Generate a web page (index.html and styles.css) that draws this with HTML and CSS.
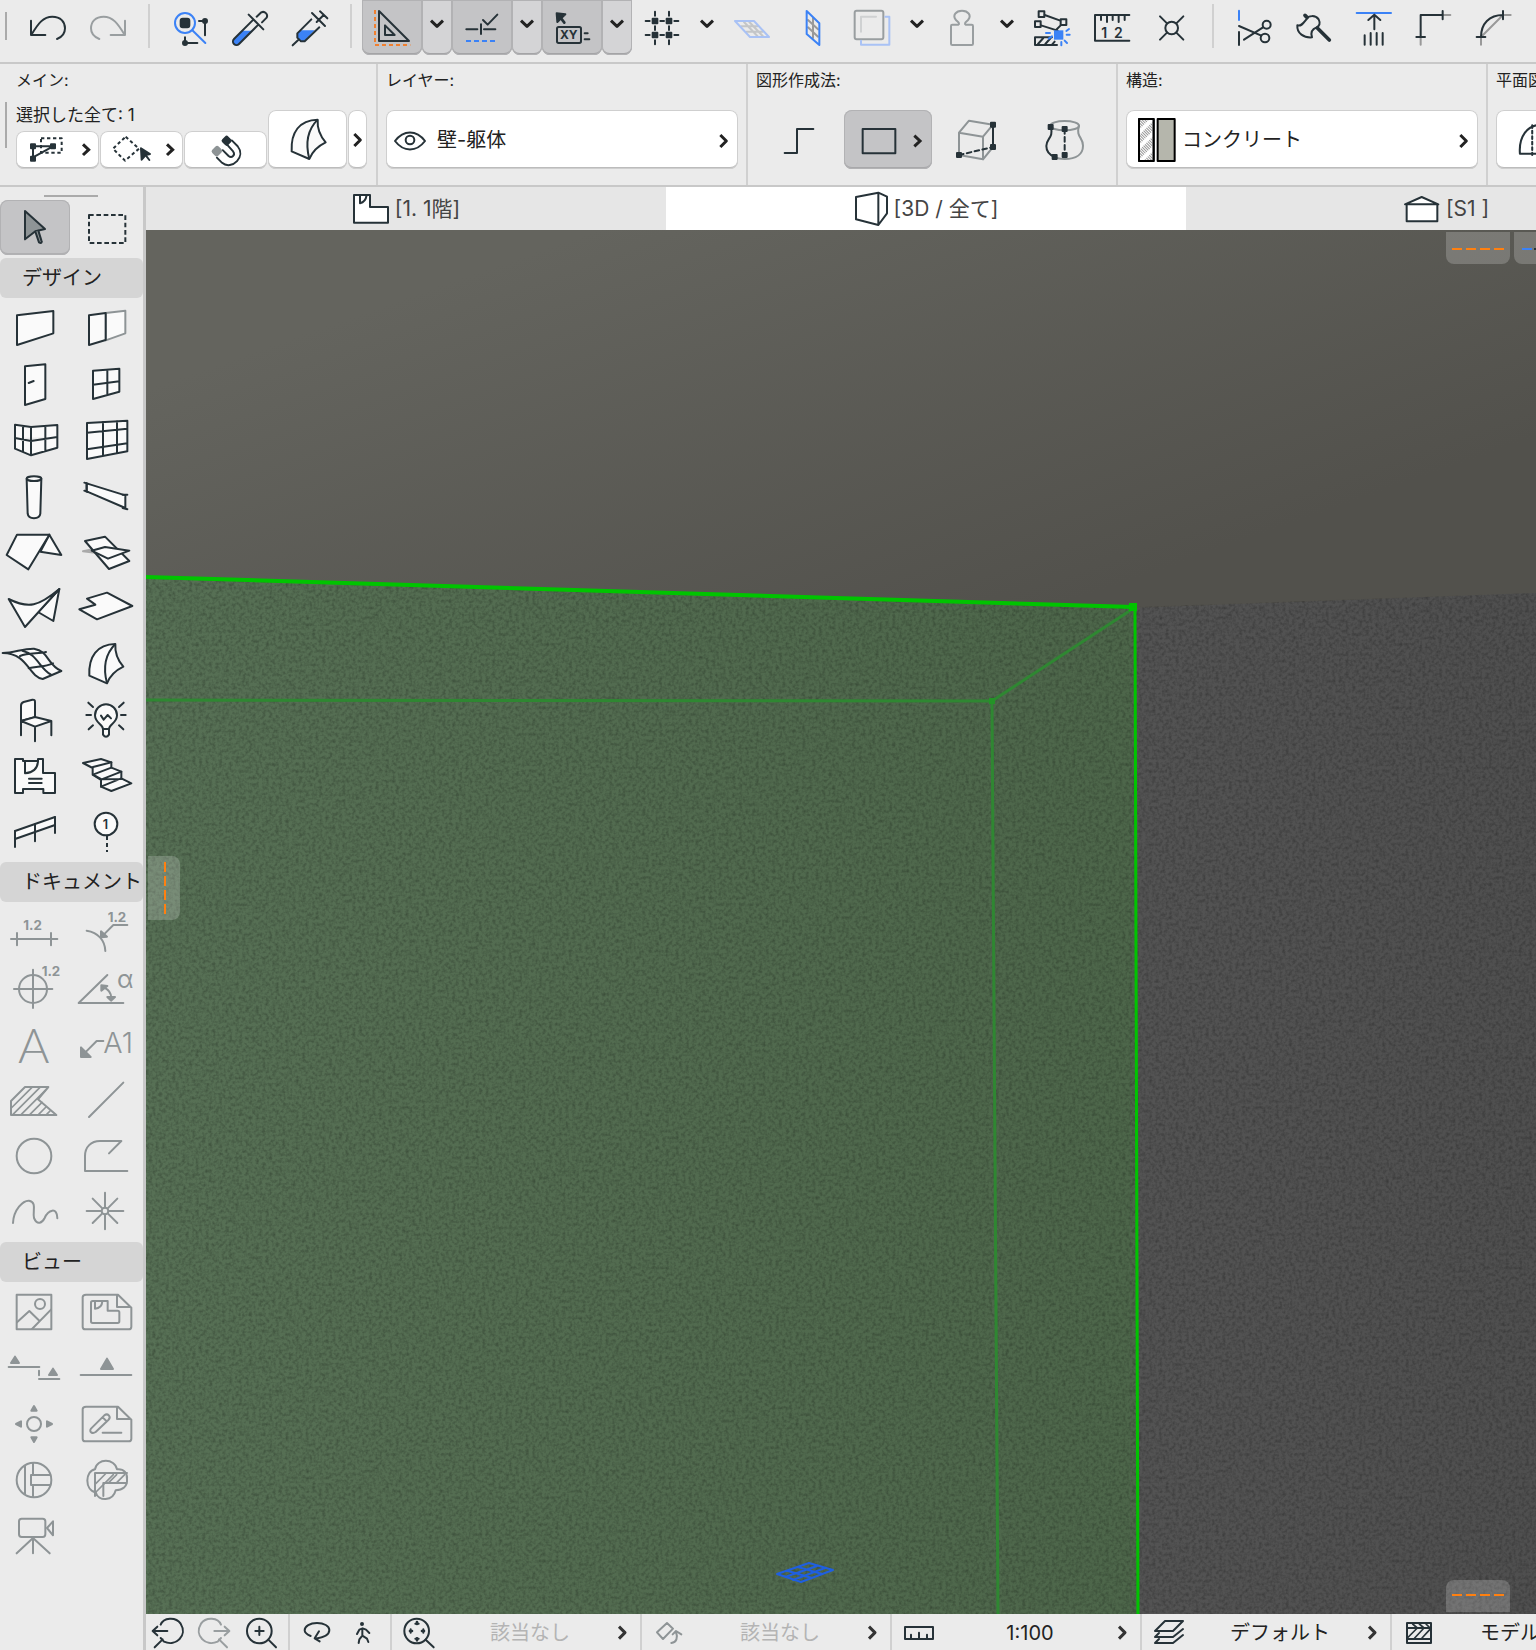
FILE: index.html
```html
<!DOCTYPE html>
<html lang="ja">
<head>
<meta charset="utf-8">
<title>3D / 全て</title>
<link rel="stylesheet" href="styles.css">
</head>
<body>
<svg class="defs" aria-hidden="true">
  <symbol id="down" viewBox="0 0 90 165"><path d="M27 62l18 17 18-17" fill="none" stroke="#222" stroke-width="9"/></symbol>
  <symbol id="next" viewBox="0 0 84 177"><path d="M34 72l18 18-18 18" fill="none" stroke="#222" stroke-width="9"/></symbol>
  <symbol id="more" viewBox="0 0 108 108"><path d="M45 38l18 18-18 18" fill="none" stroke="#333" stroke-width="9"/></symbol>
  <symbol id="shell" viewBox="0 0 120 130"><path fill="#fafafa" d="M9 102C6 45 32 8 87 7c-2 30 10 52 24 68-25 12-40 27-49 50z"/><path d="M87 7C52 42 52 87 62 125"/></symbol>
</svg>

<header class="toolbar">
  <span class="grip"></span>
  <button class="tool" aria-label="取り消し"><svg viewBox="54 0 180 165"><path d="M93 62v43h43M95 103c20-33 35-53 62-53 25 0 38 16 38 35 0 14-8 26-24 32"/></svg></button>
  <button class="tool dim" aria-label="やり直し"><svg viewBox="234 0 180 165"><path d="M375 62v43h-43M373 103c-20-33-35-53-62-53-25 0-38 16-38 35 0 14 9 26 25 32"/></svg></button>
  <span class="sep"></span>
  <button class="tool" aria-label="検索と選択"><svg viewBox="480 0 180 165"><g class="blue"><circle cx="555" cy="69" r="30"/><path d="M577 91l39 38"/></g><rect class="solid" x="542" y="56" width="26" height="26" rx="6"/><circle class="solid" cx="615" cy="63" r="6"/><path d="M597 63h18v43M555 112v17h37"/><circle class="solid" cx="555" cy="129" r="6"/></svg></button>
  <button class="tool" aria-label="スポイト"><svg viewBox="660 0 180 165"><path class="bluefill" d="M726 92h30l-40 40a10 10 0 0 1-15-14z"/><path d="M760 59l-58 58a10 10 0 0 0 15 15l58-58M770 50l14-13a12 12 0 0 1 16 16l-14 14M746 44l44 44"/></svg></button>
  <button class="tool" aria-label="注入"><svg viewBox="840 0 180 165"><path class="bluefill" d="M902 91h42l-32 33h-10l-11-11v-12z"/><path d="M934 58l-42 42v13l11 11h11l44-42M936 39l39 39M960 34l22 21M971 45l-21 21M897 118l-19 18"/></svg></button>
  <span class="sep"></span>
  <button class="tool on" aria-label="ガイド線"><svg viewBox="1086 0 180 165"><path class="orange" stroke-dasharray="12 9" stroke-linecap="butt" d="M1125 30v105h106"/><path d="M1137 33v90h90zM1155 76v29h29z"/></svg></button><button class="drop on" aria-label="ガイド線の設定"><svg><use href="#down"/></svg></button>
  <button class="tool on" aria-label="スナップガイド"><svg viewBox="1356 0 180 165"><path d="M1399 88h33M1452 88h34M1443 73v29M1449 60l14 14 29-30"/><path class="blue" stroke-dasharray="15 9" stroke-linecap="butt" d="M1398 123h90"/></svg></button><button class="drop on" aria-label="スナップガイドの設定"><svg><use href="#down"/></svg></button>
  <button class="tool on" aria-label="座標入力"><svg viewBox="126 0 180 165"><path class="solid" d="M170 40l26 3-24 23z"/><path d="M181 52l12 16" stroke-width="8"/><rect x="171" y="81" width="72" height="48" rx="5"/><text x="180" y="118" font-size="36" font-weight="700">XY</text><path d="M254 100h9M254 118h14"/></svg></button><button class="drop on" aria-label="座標入力の設定"><svg><use href="#down"/></svg></button>
  <button class="tool" aria-label="グリッドスナップ"><svg viewBox="396 0 180 165"><path d="M437 63h12M481 63h11M523 63h12M437 105h12M481 105h11M523 105h12M465 35v12M465 79v11M465 121v12M507 35v12M507 79v11M507 121v12"/><g class="solid"><rect x="458" y="56" width="14" height="14"/><rect x="500" y="56" width="14" height="14"/><rect x="458" y="98" width="14" height="14"/><rect x="500" y="98" width="14" height="14"/></g></svg></button><button class="drop" aria-label="グリッドの設定"><svg><use href="#down"/></svg></button>
  <button class="tool" aria-label="編集平面"><svg viewBox="666 0 180 165"><path stroke="#c4c6c8" d="M724 79h48M740 95h48M732 66l40 42M748 66l40 42"/><path stroke="#a9c2f5" d="M705 63h57l45 48h-57z"/></svg></button>
  <button class="tool" aria-label="垂直平面"><svg viewBox="846 0 180 165"><path stroke="#999" d="M939 54v60M924 60l30 28M924 82l30 28"/><path class="blue" d="M920 33v69l38 33V70z"/></svg></button>
  <button class="tool dim" aria-label="面"><svg viewBox="1026 0 180 165"><rect x="1064" y="32" width="86" height="86" rx="6"/><path stroke="#cfd1d2" d="M1083 95V50h45"/><path stroke="#a9c2f5" d="M1156 50h12v84h-85v-12"/></svg></button><button class="drop" aria-label="面の設定"><svg><use href="#down"/></svg></button>
  <button class="tool dim" aria-label="重力"><svg viewBox="1296 0 180 165"><path d="M1353 78a4 4 0 0 1 4-4h18c6-4-2-9-7-14-12-14 0-28 18-28s30 14 18 28c-5 5-13 10-7 14h18a4 4 0 0 1 4 4v53a4 4 0 0 1-4 4h-58a4 4 0 0 1-4-4z"/></svg></button><button class="drop" aria-label="重力の設定"><svg><use href="#down"/></svg></button>
  <button class="tool" aria-label="要素を編集"><svg viewBox="36 0 180 165"><path d="M104 45l47 17M93 76l50 16M152 76l-14 14"/><g><rect x="86" y="34" width="17" height="17"/><rect x="75" y="64" width="17" height="17"/><rect x="152" y="58" width="17" height="17"/></g><path d="M126 112H75v23h66M84 132l16-18M106 132l16-18M126 134l8-9"/><rect class="bluefill" x="132" y="91" width="28" height="28"/><path class="blue" d="M108 99h12M116 116l10-7M169 93l8-6M170 104h9M164 122l7 7M154 126v10"/></svg></button>
  <button class="tool" aria-label="寸法"><svg viewBox="215 0 180 165"><path d="M357 45H254v77h103M272 48v12M290 48v18M307 48v12M325 48v18M343 48v12"/><text x="273 311" y="113" font-size="42" font-weight="600">12</text></svg></button>
  <button class="tool" aria-label="交点"><svg viewBox="394 0 180 165"><circle cx="483" cy="84" r="19"/><path d="M448 49l21 21M518 49l-21 21M448 119l21-21M518 119l-21-21"/></svg></button>
  <span class="sep"></span>
  <button class="tool" aria-label="分割"><svg viewBox="638 0 180 165"><path class="blue" d="M683 32v28"/><path d="M683 96v39M683 78l67 29M698 119l57-37"/><circle cx="766" cy="74" r="12"/><circle cx="761" cy="114" r="13"/></svg></button>
  <button class="tool" aria-label="切断"><svg viewBox="817 0 180 165"><path d="M857 76c14 4 20-10 29-20 4-9 25-12 35 2 6 12 2 20-6 24-16 6-18 18-14 30-24 2-46-12-44-36z"/><path d="M917 84l36 36M880 46l6 6" stroke-width="11"/></svg></button>
  <button class="tool" aria-label="調整"><svg viewBox="996 0 180 165"><path class="blue" d="M1034 39h103"/><path d="M1087 88V46M1069 60l18-16 18 16M1058 106v28M1076 99v35M1094 99v35M1112 99v35"/></svg></button>
  <button class="tool" aria-label="交差"><svg viewBox="1175 0 180 165"><path stroke="#999" d="M1225 114v20M1293 45h21"/><path d="M1225 111V45h66M1212 111h26M1291 33v25"/></svg></button>
  <button class="tool" aria-label="フィレット"><svg viewBox="1353 0 180 165"><path stroke="#999" d="M1404 111l66-66M1404 114v20M1472 45h21"/><path d="M1404 111c0-40 25-66 66-66M1391 111h26M1470 33v25"/></svg></button>
</header>

<div class="infobar">
  <section class="panel main-panel">
    <span class="grip"></span>
    <div class="panel-body">
      <h3>メイン:</h3>
      <div class="main-row">
        <div class="selected">
          <p>選択した全て: 1</p>
          <div class="buttons">
            <button class="btn" aria-label="選択要素"><svg viewBox="48 394 249 114"><rect x="123" y="416" width="62" height="43" stroke-dasharray="10 8" stroke-linecap="butt"/><path d="M99 477v-37h60l-60 33"/><g class="solid"><rect x="93" y="434" width="12" height="12"/><rect x="153" y="434" width="12" height="12"/><rect x="93" y="471" width="12" height="12"/></g><path class="chev" d="M249 434l17 16-17 16"/></svg></button>
            <button class="btn" aria-label="選択方法"><svg viewBox="300 394 249 114"><path stroke-dasharray="10 8" stroke-linecap="butt" d="M377 411l40 36-42 36-36-36z"/><path class="solid" d="M423 446l27 17-13 3-12 14z"/><path d="M438 468l10 13"/><path class="chev" d="M501 434l17 16-17 16"/></svg></button>
            <button class="btn" aria-label="磁石"><svg viewBox="552 391 249 117"><path d="M650 473l16 16c14 12 34 8 46-5s14-31 2-46l-18-18M668 450l18 18c10 8 22-3 14-14l-18-20"/><rect x="640" y="442" width="20" height="22" rx="4" transform="rotate(45 650 453)" fill="#8e9496" stroke="#8e9496"/><rect class="solid" x="670" y="411" width="20" height="20" rx="4" transform="rotate(45 680 421)"/></svg></button>
          </div>
        </div>
        <button class="btn shell" aria-label="シェル設定"><svg viewBox="-62 -22 237 177"><use href="#shell" width="120" height="130"/></svg></button>
        <button class="btn slim" aria-label="お気に入り"><svg viewBox="15 0 57 177"><use href="#next" width="84" height="177"/></svg></button>
      </div>
    </div>
  </section>
  <section class="panel">
    <div class="panel-body">
      <h3><label for="layer">レイヤー:</label></h3>
      <div class="field">
        <svg class="lead" viewBox="1161 333 150 171"><path d="M1185 423c26-34 64-34 90 0-26 34-64 34-90 0z"/><circle cx="1230" cy="420" r="13"/></svg>
        <select id="layer"><option>壁-躯体</option></select>
        <svg class="tail"><use href="#next"/></svg>
      </div>
    </div>
  </section>
  <section class="panel">
    <div class="panel-body">
      <h3>図形作成法:</h3>
      <div class="methods">
        <button aria-label="押し出し"><svg viewBox="768 330 264 177"><path d="M854 459h37v-72h49"/></svg></button>
        <button class="on" aria-label="矩形"><svg viewBox="1032 330 264 177"><rect x="1088" y="387" width="98" height="73"/><path class="chev" d="M1243 407l17 16-17 16"/></svg></button>
        <button aria-label="箱形"><svg viewBox="1296 330 264 177"><path stroke="#8e9496" d="M1377 398l30-36 72 12-30 36zM1377 398v67l72 13v-68M1449 478l30-37"/><path d="M1479 374v67"/><path stroke-dasharray="14 10" d="M1377 465l102-24"/><g class="solid"><rect x="1473" y="368" width="12" height="12"/><rect x="1473" y="435" width="12" height="12"/><rect x="1371" y="459" width="12" height="12"/></g></svg></button>
        <button aria-label="回転体"><svg viewBox="30 330 264 177"><g stroke="#8e9496"><ellipse cx="164" cy="377" rx="43" ry="14"/><path d="M207 377c-10 34 12 34 12 60 0 25-20 40-55 40-10 0-20 0-28-6"/></g><path d="M122 380c10 34-13 34-13 58 0 18 10 27 25 33"/><path stroke-dasharray="14 10" d="M164 387v78"/><g class="solid"><rect x="116" y="375" width="12" height="12"/><rect x="158" y="381" width="12" height="12"/><rect x="158" y="459" width="12" height="12"/><rect x="128" y="465" width="12" height="12"/></g></svg></button>
      </div>
    </div>
  </section>
  <section class="panel">
    <div class="panel-body">
      <h3><label for="structure">構造:</label></h3>
      <div class="field">
        <svg class="lead wide" viewBox="349 333 165 171"><clipPath id="slab"><rect x="385" y="357" width="44" height="126"/></clipPath><rect x="385" y="357" width="44" height="126" fill="#fff"/><g clip-path="url(#slab)" stroke="#999" stroke-width="20" stroke-dasharray="3 3" stroke-linecap="butt"><path d="M375 385l60-60M375 430l60-60M375 475l60-60M375 520l60-60"/></g><rect x="385" y="357" width="44" height="126" stroke="#000"/><rect x="441" y="357" width="51" height="126" fill="#b5b6ac" stroke="#000"/></svg>
        <select id="structure"><option>コンクリート</option></select>
        <svg class="tail"><use href="#next"/></svg>
      </div>
    </div>
  </section>
  <section class="panel last">
    <div class="panel-body">
      <h3>平面図</h3>
      <button class="btn plan" aria-label="平面図と断面図"><svg viewBox="1454 333 240 171"><path d="M1618 460h-94c-4-50 22-84 60-84"/><path stroke-dasharray="8 8" d="M1560 377v87"/></svg></button>
    </div>
  </section>
</div>

<div class="workspace">
  <nav class="toolbox">
    <span class="handle"></span>
    <div class="cells first">
      <button class="on" aria-label="矢印"><svg viewBox="0 30 216 168"><path fill="#8e9496" d="M75 63l60 54-29 7-31 24z"/><path d="M106 125l11 32c8 5 10-2 7-6l-9-29" fill="#8e9496"/></svg></button>
      <button aria-label="矩形選択"><svg viewBox="216 30 213 168"><rect x="267" y="75" width="109" height="84" stroke-dasharray="14 8" stroke-linecap="butt"/></svg></button>
    </div>
    <h2>デザイン</h2>
    <div class="cells">
      <button aria-label="壁"><svg viewBox="0 330 216 168"><path class="w" d="M51 376l109-13v67L51 465z"/></svg></button>
      <button aria-label="壁端部"><svg viewBox="216 330 213 168"><path class="w" stroke="#8e9496" d="M317 369l59-7v68l-59 21z"/><path class="w" d="M267 376l50-7v81l-50 15z"/></svg></button>
      <button aria-label="ドア"><svg viewBox="0 498 216 168"><path class="w" d="M75 529l61-6v104l-61 18z"/><path d="M86 579l15-6"/></svg></button>
      <button aria-label="窓"><svg viewBox="216 498 213 168"><path class="w" d="M279 542l79-6v69l-79 22zM322 539v76M279 584l79-10"/></svg></button>
      <button aria-label="コーナー窓"><svg viewBox="0 666 216 168"><path class="w" d="M45 704l48 7 79-6v68l-79 23-48-20zM93 711v85M69 708v78M136 708v76M45 744l48 9 79-12"/></svg></button>
      <button aria-label="カーテンウォール"><svg viewBox="216 666 213 168"><path class="w" d="M261 699l121-7v92l-121 23zM309 696v102M351 694v96M261 728l121-12M261 778l121-18"/></svg></button>
      <button aria-label="柱"><svg viewBox="0 834 216 168"><path class="w" d="M80 866l3 105c2 18 36 18 38 0l3-105"/><ellipse class="w" cx="102" cy="866" rx="22" ry="7"/></svg></button>
      <button aria-label="梁"><svg viewBox="216 834 213 168"><path class="w" d="M260 880l116 36v38l-116-50z"/><path d="M253 878l10 3M253 902l10 4M368 914h14M368 954l14 4M260 880v24"/></svg></button>
      <button aria-label="屋根"><svg viewBox="0 -18 216 168"><path class="w" d="M148 14l36 61-63-10z"/><path class="w" d="M51 14h97L85 118 20 75z"/></svg></button>
      <button aria-label="天窓"><svg viewBox="216 -18 213 168"><path fill="#bbb" stroke="#aaa" d="M249 64l36-8 12 14z"/><path class="w" d="M255 33l60-13 73 73-61 24z"/><path class="w" d="M275 62l40-11 73 11-64 24z"/></svg></button>
      <button aria-label="シェル屋根"><svg viewBox="0 150 216 168"><path class="w" d="M178 177l-18 96-46-27z"/><path class="w" d="M26 207c60 30 90 22 152-30L75 291z"/></svg></button>
      <button aria-label="スラブ"><svg viewBox="216 150 213 168"><path class="w" d="M261 206l60-18 76 40-106 40-53-30 48-14z"/></svg></button>
      <button aria-label="メッシュ"><svg viewBox="0 318 216 168"><path class="w" d="M8 369c35 0 60-14 94-13 45 8 40 50 82 67l-56 24C85 440 85 370 8 369zM60 378c25-10 55-6 78-12M86 415c25-6 50-4 73-15M67 362c45 10 50 52 86 72"/></svg></button>
      <button aria-label="シェル"><svg viewBox="216 318 213 168"><use href="#shell" x="259" y="335" width="120" height="130"/></svg></button>
      <button aria-label="オブジェクト"><svg viewBox="0 486 216 168"><path class="w" d="M63 573v-46q0-8 8-11l26-7q8-1 8 7v46z"/><path class="w" d="M63 573l42-12 49 12-49 17zM63 573v43M105 590v44M154 573v43"/></svg></button>
      <button aria-label="ランプ"><svg viewBox="216 486 213 168"><path class="w" d="M309 597c0-14-24-18-24-41a33 33 0 0 1 66 0c0 23-24 27-24 41zM309 597h18v17q-9 13-18 0z"/><path d="M303 557l8 12 12-14 10 10M265 518l14 13M371 518l-14 13M259 555h14M363 555h14M266 598l13-12M370 598l-13-12"/></svg></button>
      <button aria-label="ゾーン"><svg viewBox="0 654 216 168"><path class="w" d="M45 687h24v6h45v-6h15v42h36v60h-35v-12H69v12H45z"/><path d="M75 693v37c24-2 38-14 39-37M87 746h38M87 759h38"/></svg></button>
      <button aria-label="階段"><svg viewBox="216 654 213 168"><path class="w" d="M249 699l54-12 31 10v16l30 12v20l30 15-60 23-31-13v-20l-25-16v-20z"/><path d="M279 711l55-14M279 734l55-21M279 734l26 14 59-23M303 748l61-1M303 770l61-25"/></svg></button>
      <button aria-label="手摺り"><svg viewBox="0 822 216 168"><path class="w" d="M45 903l120-42v24L45 927z"/><path d="M45 903v48M105 883v51M165 861v48"/></svg></button>
      <button aria-label="通り芯"><svg viewBox="216 822 213 168"><circle class="w" cx="318" cy="882" r="34"/><text x="308" y="896" font-size="38" font-weight="600">1</text><path stroke-dasharray="12 9" stroke-linecap="butt" d="M321 918v48"/></svg></button>
    </div>
    <h2>ドキュメント</h2>
    <div class="cells dim">
      <button aria-label="寸法"><svg viewBox="0 132 216 168"><text x="70" y="209" font-size="40" font-weight="700">1.2</text><path d="M33 237h139M51 219v37M153 219v37"/></svg></button>
      <button aria-label="半径寸法"><svg viewBox="216 132 213 168"><text x="323" y="185" font-size="40" font-weight="700">1.2</text><path d="M382 195h-42l-25 25M260 212c35 5 55 30 56 61"/><path class="solid" d="M303 214v18l18-2z"/></svg></button>
      <button aria-label="レベル寸法"><svg viewBox="0 300 216 168"><text x="125" y="348" font-size="40" font-weight="700">1.2</text><circle cx="99" cy="387" r="42"/><path d="M42 387h115M99 329v115"/></svg></button>
      <button aria-label="角度寸法"><svg viewBox="216 300 213 168"><path d="M322 345l-86 84h134M312 382c16 8 22 20 22 32"/><path class="solid" d="M304 392v-16l18 2zM322 411h23l-12 11z"/><text x="351" y="383" font-size="74" font-weight="400">α</text></svg></button>
      <button aria-label="テキスト"><svg viewBox="0 468 216 168"><text class="thin" x="54" y="610" font-size="144">A</text></svg></button>
      <button aria-label="ラベル"><svg viewBox="216 468 213 168"><text x="310" y="580" font-size="86" font-weight="300">A1</text><path d="M310 543h-20l-34 34"/><path class="solid" d="M243 562v29h29z"/></svg></button>
      <button aria-label="塗りつぶし"><svg viewBox="0 636 216 168"><path d="M33 723l42-42h70l-31 37 55 47H33z"/><path stroke-width="5" d="M34 744l62-62M39 763l81-81M64 763l72-72M90 763l36-36M116 763l22-22M140 763l10-10"/></svg></button>
      <button aria-label="線"><svg viewBox="216 636 213 168"><path d="M267 771l103-103"/></svg></button>
      <button aria-label="円"><svg viewBox="0 804 216 168"><circle cx="102" cy="888" r="52"/></svg></button>
      <button aria-label="ポリライン"><svg viewBox="216 804 213 168"><path d="M382 933H255v-45c0-27 18-45 45-45h64l-37 37"/></svg></button>
      <button aria-label="スプライン"><svg viewBox="0 972 216 168"><path d="M39 1089c2-40 30-68 48-67 25 4 10 34 15 52 10 24 25 14 32 0 10-24 38-35 38 1"/></svg></button>
      <button aria-label="ホットスポット"><svg viewBox="216 972 213 168"><circle cx="315" cy="1053" r="10"/><path d="M315 998v44M315 1064v44M260 1053h44M326 1053h44M278 1016l29 29M352 1016l-29 29M278 1089l29-29M352 1089l-29-29"/></svg></button>
    </div>
    <h2>ビュー</h2>
    <div class="cells dim">
      <button aria-label="図"><svg viewBox="0 132 216 168"><rect x="50" y="164" width="104" height="104"/><circle cx="120" cy="192" r="15"/><path d="M51 247l37-34 30 29M96 267l57-58"/></svg></button>
      <button aria-label="図面"><svg viewBox="216 132 213 168"><path d="M258 164h96l40 39v57q0 8-8 8H256q-8 0-8-8v-88q0-8 10-8zM351 166v35h40"/><path d="M278 183h45v29h30q5 0 5 5v27q0 5-5 5h-75q-5 0-5-5v-56q0-5 5-5M285 184v22c14-1 21-9 22-22"/></svg></button>
      <button aria-label="断面図"><svg viewBox="0 300 216 168"><path d="M26 381h92M117 392v14M117 417h61"/><path class="solid" d="M45 350l12 19H33zM159 386l12 19h-24z"/></svg></button>
      <button aria-label="立面図"><svg viewBox="216 300 213 168"><path d="M242 405h152"/><path class="solid" d="M321 356l18 31h-36z"/></svg></button>
      <button aria-label="展開図"><svg viewBox="0 468 216 168"><circle cx="102" cy="552" r="21"/><path class="solid" d="M102 498l8 14H94zM102 606l8-14H94zM48 552l15-8v16zM156 552l-15-8v16z"/></svg></button>
      <button aria-label="ワークシート"><svg viewBox="216 468 213 168"><path d="M258 500h96l40 39v57q0 8-8 8H256q-8 0-8-8v-88q0-8 10-8zM351 502v35h40M308 578h56"/><path d="M273 566l40-40c10-8 22 4 12 14l-38 36c-10 7-21-1-14-10zM308 532l11 11"/></svg></button>
      <button aria-label="詳細図"><svg viewBox="0 636 216 168"><circle cx="102" cy="720" r="52"/><path d="M75 678v84M99 669v36M99 735v36M151 705H93v30h58"/></svg></button>
      <button aria-label="変更"><svg viewBox="216 636 213 168"><path d="M285 688c5-34 60-34 66 0 22-2 32 12 30 30 2 22-14 32-34 33-8 34-52 34-60 6-34-8-32-64-2-69zM285 768v-69h96M310 768v-39h71"/><path stroke-width="5" d="M288 730l28-28M288 756l52-52M326 728l24-24M350 728l24-24"/></svg></button>
      <button aria-label="カメラ"><svg viewBox="0 804 216 168"><rect x="57" y="836" width="79" height="55" rx="8"/><path d="M141 864l18-20v42zM99 894v46M99 894l-49 46M99 894l50 46"/></svg></button>
    </div>
  </nav>

  <main class="stage">
    <div class="tabs" role="tablist">
      <button class="tab" role="tab"><svg width="38" height="32" viewBox="1047 573 114 96"><path fill="#fff" d="M1053 579h48v36h54v47h-102z"/><path d="M1071 579v25c12-3 18-12 20-25"/></svg>[1. 1階]</button>
      <button class="tab active" role="tab"><svg width="35" height="36" viewBox="1058 573 105 108"><path d="M1064 591l67-13 26 12v50l-26 35-67-17zM1131 578v97"/></svg>[3D / 全て]</button>
      <button class="tab" role="tab"><svg width="38" height="28" viewBox="1166 579 114 84"><path fill="#fff" d="M1177 607v51h92v-51M1172 607l50-22 50 22z"/></svg>[S1 ]</button>
    </div>
    <div class="viewport">
      <svg class="scene" role="img" aria-label="3D ビュー">
        <defs>
          <linearGradient id="ceil" gradientUnits="userSpaceOnUse" x1="450" y1="0" x2="620" y2="480"><stop offset="0" stop-color="#64645e"/><stop offset="1" stop-color="#52514c"/></linearGradient>
          <linearGradient id="green" gradientUnits="userSpaceOnUse" x1="0" y1="0" x2="990" y2="0"><stop offset="0" stop-color="#577055"/><stop offset="1" stop-color="#4d664a"/></linearGradient>
          <linearGradient id="dark" gradientUnits="userSpaceOnUse" x1="990" y1="0" x2="1390" y2="0"><stop offset="0" stop-color="#535353"/><stop offset="1" stop-color="#4f4f4f"/></linearGradient>
          <filter id="plaster" x="0" y="0" width="100%" height="100%" color-interpolation-filters="sRGB"><feTurbulence type="fractalNoise" baseFrequency=".3" numOctaves="2" seed="4"/><feColorMatrix values="0 0 0 0 0  0 0 0 0 0  0 0 0 0 0  .9 0 0 0 -.35"/><feComposite in2="SourceGraphic" operator="in"/></filter>
        </defs>
        <rect width="100%" height="100%" fill="url(#ceil)"/>
        <path d="M988 378l402-15 1200-45v2400H992z" fill="url(#dark)"/>
        <path d="M0 347l988 30 4 1007v1200H0z" fill="url(#green)"/>
        <path d="M0 347l988 30 402-14v1021H0z" fill="#000" filter="url(#plaster)" opacity=".55"/>
        <path d="M0 470l846 1 6 913M846 471l142-93" fill="none" stroke="#2f8732" stroke-width="3"/>
        <rect x="843" y="468" width="6" height="6" fill="#249327"/>
        <path d="M989 377l3 1007" fill="none" stroke="#00c400" stroke-width="3"/>
        <path d="M0 347l988 30" fill="none" stroke="#00c400" stroke-width="4"/>
        <rect x="983" y="373" width="8" height="8" fill="#00c400"/>
        <path d="M631 1344l32-11 24 7-32 12zM642 1341l24 7M652 1337l24 7M639 1347l32-11M647 1350l32-12" fill="none" stroke="#1f5fe0" stroke-width="2"/>
      </svg>
      <button class="pad top" aria-label="上ガイド"></button>
      <button class="pad top second" aria-label="上スナップ"></button>
      <button class="pad left" aria-label="左ガイド"></button>
      <button class="pad bottom" aria-label="下ガイド"></button>
    </div>
    <footer class="status">
      <div class="group nav">
        <button aria-label="前のズーム"><svg viewBox="18 222 142 108"><path d="M82 273H38M52 260l-14 13 14 13M62 254c8-22 45-25 60-3 22 35-14 70-50 54l-10-11M68 298l-24 24"/></svg></button>
        <button class="dim" aria-label="次のズーム"><svg viewBox="160 222 142 108"><path d="M224 273h44M255 260l14 13-14 13M244 254c-8-22-45-25-60-3-22 35 14 70 50 54l10-11M238 298l24 24"/></svg></button>
        <button aria-label="ズーム"><svg viewBox="302 222 142 108"><circle cx="357" cy="273" r="37"/><path d="M345 273h25M357 260v25M384 299l23 23"/></svg></button>
      </div>
      <div class="group walk">
        <button aria-label="回転"><svg viewBox="450 222 150 108"><path d="M512 288c-10-4-18-10-18-17 0-13 16-22 37-22s37 9 37 21c0 13-12 22-42 26M537 274l-13 21 15 9"/></svg></button>
        <button aria-label="ウォーク"><svg viewBox="600 222 150 108"><circle class="solid" cx="666" cy="252" r="3"/><path d="M651 282l7-13 10-4 10 4 10 10M667 266v21l-9 11-2 11M667 287l14 9 4 10" /></svg></button>
      </div>
      <div class="group pick">
        <svg class="icon" viewBox="756 222 162 108"><circle cx="830" cy="273" r="37"/><path d="M857 299l24 23"/><path stroke-width="8" d="M810 273h6M846 273h6M831 246v6M831 295v6"/><path d="M812 268v10M850 268v10M826 251h10M826 296h10"/></svg>
        <select class="off" aria-label="ズーム設定"><option>該当なし</option></select>
        <svg class="tail"><use href="#more"/></svg>
      </div>
      <div class="group pick">
        <svg class="icon gray" viewBox="6 222 162 108"><path d="M51 277l30-28 18 17-30 31zM94 309c16-2 20-16 14-34M98 283l10-10 16 10"/></svg>
        <select class="off" aria-label="方向設定"><option>該当なし</option></select>
        <svg class="tail"><use href="#more"/></svg>
      </div>
      <div class="group pick">
        <svg class="icon" viewBox="756 222 162 108"><path d="M795 261h84v36h-84zM813 295v-11M837 295v-17M861 295v-11"/></svg>
        <select aria-label="縮尺"><option>1:100</option></select>
        <svg class="tail"><use href="#more"/></svg>
      </div>
      <div class="group pick">
        <svg class="icon" viewBox="126 222 162 108"><path d="M165 273l30-30h54l-30 30zM165 291h54l30-24M165 291l12-12M165 309h54l30-24M165 309l12-12"/></svg>
        <select aria-label="レイヤーセット"><option>デフォルト</option></select>
        <svg class="tail"><use href="#more"/></svg>
      </div>
      <div class="group pick rest">
        <svg class="icon" viewBox="876 222 162 108"><path d="M921 249h72v60h-72zM921 297h72M921 264h72"/><path stroke-width="5" d="M922 294l30-30-14-12M944 294l28-30-14-12M966 294l26-28-14-14"/></svg>
        <select aria-label="モデル表示"><option>モデル</option></select>
      </div>
    </footer>
  </main>
</div>
</body>
</html>
```
FILE: styles.css
```css
* { box-sizing: border-box; }

body {
  margin: 0;
  min-height: 100vh;
  display: flex;
  flex-direction: column;
  overflow-x: hidden;
  background: #ebebeb;
  color: #222;
  font: 17px/20px Inter, "Noto Sans CJK JP", sans-serif;
}

h2, h3, p { margin: 0; font-weight: 400; }

button, select {
  margin: 0;
  padding: 0;
  border: 0;
  background: none;
  color: inherit;
  font: inherit;
}

select { appearance: none; min-width: 0; }

svg {
  display: block;
  fill: none;
  stroke: #263238;
  stroke-width: 6;
  stroke-linecap: round;
  stroke-linejoin: round;
}

svg text { fill: #263238; stroke: none; }
svg .thin { font-family: Lato, sans-serif; font-weight: 300; }
.defs { position: absolute; width: 0; height: 0; }
.solid { fill: #263238; }
.blue { stroke: #3b82f6; }
.bluefill { fill: #3b82f6; stroke: none; }
.orange { stroke: #f08030; }
.w { fill: #fafafa; }
.chev { stroke: #222; stroke-width: 9; stroke-linecap: butt; stroke-linejoin: miter; }
symbol { stroke-linecap: butt; }
.dim svg { stroke: #999ea0; }
.dim svg text, .dim .solid { fill: #8e9496; }
.cells.dim svg, .gray { stroke: #8e9496; }

.grip { flex: none; width: 2px; background: #aaa; }

/* Top toolbar */
.toolbar {
  display: flex;
  align-items: flex-start;
  height: 64px;
  padding-left: 5px;
  overflow: hidden;
  border-bottom: 2px solid #c8c8c8;
}
.toolbar .grip { height: 28px; margin: 12px 11px 0 0; }
.toolbar .sep { flex: none; width: 2px; height: 44px; margin: 4px 10px 0; background: #d0d0d0; }
.tool, .drop { flex: none; height: 55px; }
.tool { width: 60px; }
.drop { width: 30px; }
.toolbar svg { width: 60px; height: 55px; }
.toolbar .drop svg { width: 30px; }
.toolbar .on {
  overflow: hidden;
  background: #c4c4c6;
  border-radius: 0 0 8px 8px;
  box-shadow: inset 0 0 0 1px #b2b2b4, inset 0 -2px 0 #a4a4a6;
}
.toolbar .drop.on { background: #d4d4d6; }

/* Info bar */
.infobar {
  display: flex;
  height: 123px;
  overflow: hidden;
  border-bottom: 2px solid #c8c8c8;
}
.panel {
  flex: none;
  display: flex;
  width: 370px;
  padding: 0 8px;
  border-right: 2px solid #d0d0d0;
}
.main-panel { width: 378px; padding: 0 0 0 5px; }
.main-panel .grip { height: 46px; margin: 38px 9px 0 0; }
.panel.last { flex: 1 0 48px; border: 0; }
.panel-body { display: flex; flex-direction: column; flex: 1; min-width: 0; padding-top: 5px; }
.panel h3 { font-size: 16px; line-height: 22px; white-space: nowrap; margin-bottom: 19px; }
.main-row { display: flex; align-items: flex-end; gap: 1px; height: 59px; }
.selected p { line-height: 20px; padding-bottom: 6px; }
.buttons { display: flex; gap: 1px; }
.btn {
  flex: none;
  overflow: hidden;
  width: 83px;
  height: 38px;
  background: #fff;
  border-radius: 8px;
  box-shadow: inset 0 0 0 1px #cfcfcf, inset 0 -2px 0 #bcbcbc;
}
.btn svg { width: 100%; height: 100%; }
.btn.shell { width: 79px; height: 59px; }
.btn.slim { width: 19px; height: 59px; }
.btn.plan { width: 82px; height: 59px; }
.field {
  display: flex;
  height: 59px;
  padding: 1px;
  background: #fff;
  border-radius: 8px;
  box-shadow: inset 0 0 0 1px #cfcfcf, inset 0 -2px 0 #bcbcbc;
}
.lead { flex: none; width: 50px; height: 57px; }
.lead.wide { width: 55px; }
.field select { flex: 1; padding-top: 1px; font-size: 20px; }
.tail { flex: none; width: 28px; height: 59px; }
.methods { display: flex; }
.methods button { flex: 0 0 88px; height: 59px; }
.methods svg { width: 88px; height: 59px; }
.methods .on {
  background: #c4c4c6;
  border-radius: 8px;
  box-shadow: inset 0 0 0 1px #b2b2b4, inset 0 -2px 0 #a8a8aa;
}

/* Toolbox */
.workspace { display: flex; flex: 1; }
.toolbox { flex: none; width: 146px; border-right: 3px solid #c8c8c8; }
.handle { display: block; width: 54px; height: 2px; margin: 8px 0 3px 44px; background: #aaa; }
.toolbox h2 {
  height: 40px;
  padding-left: 22px;
  background: #d5d5d5;
  border-radius: 6px;
  font-size: 20px;
  line-height: 40px;
  white-space: nowrap;
  overflow: hidden;
}
.cells { display: grid; grid-template-columns: 72px 71px; padding: 2px 0; }
.cells.first { padding: 0 0 2px; }
.cells button, .cells svg { width: 100%; height: 56px; }
.cells svg { overflow: visible; }
.cells .on {
  width: 70px;
  height: 55px;
  background: #c4c4c6;
  border-radius: 8px;
  box-shadow: inset 0 0 0 1px #b2b2b4, inset 0 -2px 0 #b0b0b2;
}
.cells .on svg { width: 72px; }

/* Tabs and viewport */
.stage { flex: 1; min-width: 0; display: flex; flex-direction: column; }
.tabs { display: flex; height: 43px; overflow: hidden; background: #e6e6e6; }
.tab {
  flex: 0 0 520px;
  display: flex;
  align-items: center;
  justify-content: center;
  gap: 5px;
  font-size: 21px;
  color: #444;
}
.tab.active { background: #fff; }
.viewport { position: relative; flex: 1; min-height: 400px; overflow: hidden; background: #545450; }
.scene { position: absolute; inset: 0; width: 100%; height: 100%; stroke: none; }
.pad {
  position: absolute;
  width: 64px;
  height: 32px;
  background: rgba(255, 255, 255, .2);
}
.pad::after {
  content: "";
  position: absolute;
  inset: 16px 6px auto;
  height: 2px;
  background: repeating-linear-gradient(90deg, #ff8010 0 10px, transparent 10px 14px);
}
.pad.top { right: 26px; top: 2px; border-radius: 0 0 8px 8px; }
.pad.second { right: -42px; }
.pad.second::after {
  inset: 16px auto auto 8px;
  width: 14px;
  background: linear-gradient(90deg, #3b82f6 10px, transparent 10px 12px, #263238 12px);
}
.pad.bottom { right: 26px; bottom: 2px; border-radius: 8px 8px 0 0; }
.pad.bottom::after { inset: 14px 6px auto; }
.pad.left { left: 2px; top: 626px; width: 32px; height: 64px; border-radius: 0 8px 8px 0; }
.pad.left::after {
  inset: 6px auto 6px 16px;
  width: 2px;
  height: auto;
  background: repeating-linear-gradient(#ff8010 0 10px, transparent 10px 14px);
}

/* Status bar */
.status { display: flex; height: 36px; overflow: hidden; }
.group { flex: none; display: flex; border-right: 2px solid #d0d0d0; }
.group.nav { width: 144px; }
.group.walk { width: 102px; }
.group button { flex: 1; min-width: 0; }
.group button svg { width: 100%; height: 36px; }
.group.pick { width: 250px; }
.group.rest { flex: 1 0 144px; border: 0; }
.icon { flex: none; width: 54px; height: 36px; }
.pick select { flex: 1; padding: 2px 0 0 10px; font-size: 20px; line-height: 30px; text-align-last: center; }
.pick select.off { color: #b4b4b4; }
.pick .tail { width: 36px; height: 36px; }
.rest select { padding-left: 34px; text-align-last: left; }
```
